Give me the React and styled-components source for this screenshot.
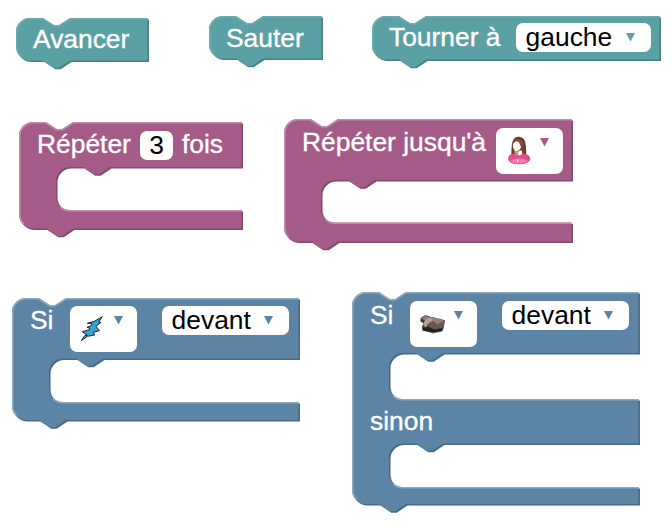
import React from "react";
import styled, { createGlobalStyle } from "styled-components";

const GlobalStyle = createGlobalStyle`
  body { margin: 0; background: #fff; }
`;

const palettes = {
  action: { main: "#5ba0a5", dark: "#498084", light: "#6cabb0" },
  loop: { main: "#a55b88", dark: "#84496d", light: "#c08cac" },
  logic: { main: "#5b84a5", dark: "#496a84", light: "#8ca9c0" },
};

const Workspace = styled.main`
  position: relative;
  width: 672px;
  height: 526px;
  overflow: hidden;
  background: #fff;
  font-family: "Liberation Sans", Arial, sans-serif;
  font-size: 26.4px;
`;

/* Blocks sit freely on the workspace canvas. */
const BlockFrame = styled.section`
  position: absolute;
  left: ${(p) => p.$x}px;
  top: ${(p) => p.$y}px;
  width: ${(p) => p.$width}px;
  height: ${(p) => p.$height}px;
  color: ${(p) => p.$tone.main};
`;

const Silhouette = styled.svg`
  position: absolute;
  inset: 0;
  overflow: visible;
`;

const Row = styled.div`
  position: relative;
  display: flex;
  align-items: flex-start;
  height: ${(p) => p.$height}px;
  padding: ${(p) => p.$top}px 0 0 ${(p) => p.$left || 17}px;
  box-sizing: border-box;
`;

const Label = styled.span`
  color: #fff;
  line-height: 29px;
  white-space: pre;
  -webkit-text-stroke: 0.35px #fff;
  margin-top: ${(p) => p.$shift || 0}px;
  margin-left: ${(p) => p.$gap || 0}px;
  width: ${(p) => (p.$width ? `${p.$width}px` : "auto")};
`;

const Field = styled.span`
  display: flex;
  flex: none;
  box-sizing: border-box;
  width: ${(p) => p.$width}px;
  height: 29px;
  margin-left: ${(p) => p.$gap || 0}px;
  padding: 0 16px 0 9.6px;
  justify-content: space-between;
  border-radius: 7px;
  background: #fff;
  line-height: 29px;
`;

const NumberField = styled(Field)`
  padding: 0;
  justify-content: center;
  line-height: 28px;
`;

const PictureField = styled(Field)`
  height: 45.5px;
  padding: 5px 14px 0 5px;
`;

const Value = styled.span`
  color: #000;
`;

const ArrowIcon = styled.svg`
  flex: none;
  margin-top: ${(p) => p.$top}px;
`;

const Picture = styled.svg`
  flex: none;
`;

function Arrow({ top = 10 }) {
  return (
    <ArrowIcon $top={top} width="9" height="9" viewBox="0 0 9 9">
      <path d="M0 0H9L4.5 8.5Z" fill="currentColor" />
    </ArrowIcon>
  );
}

const R = 14;
const ARM = 37;
const NOTCH = "l10.8 7.2h5.4l10.8 -7.2";
const TAB = "l-10.8 7.2h-5.4l-10.8 -7.2";

function outline(w, h, mouths) {
  const inner = mouths
    .map(
      ([top, bottom]) =>
        `V${top}H${ARM + 54}${TAB}H${ARM + R}a${R} ${R} 0 0 0 ${-R} ${R}` +
        `V${bottom - R}a${R} ${R} 0 0 0 ${R} ${R}H${w}`
    )
    .join("");
  return `M0 ${R}A${R} ${R} 0 0 1 ${R} 0H27${NOTCH}H${w}${inner}V${h}H54${TAB}H${R}A${R} ${R} 0 0 1 0 ${h - R}Z`;
}

function highlight(w, h, mouths) {
  const r = R - 0.8;
  const edge = `M4.6 ${h - 4.6}A${r} ${r} 0 0 1 .8 ${h - R}V${R}A${r} ${r} 0 0 1 ${R} .8H26.6l11.4 7.2h4.9l11.4 -7.2H${w}`;
  const lips = mouths
    .map(([, b]) => `M${ARM + 4.2} ${b - 3}a${R} ${R} 0 0 0 9.8 3.8H${w}`)
    .join("");
  return edge + lips;
}

function Block({ x, y, width, height, tone, mouths = [], children }) {
  const colors = palettes[tone];
  const w = width - 1.5;
  const h = height - 1.5;
  const shape = outline(w, h, mouths);
  return (
    <BlockFrame $x={x} $y={y} $width={width} $height={height} $tone={colors}>
      <Silhouette width={width} height={height + 8}>
        <path d={shape} fill={colors.dark} transform="translate(1.5 1.5)" />
        <path d={shape} fill={colors.main} />
        <path d={highlight(w, h, mouths)} fill="none" stroke={colors.light} strokeWidth="1.6" />
      </Silhouette>
      {children}
    </BlockFrame>
  );
}

function Dropdown({ children, width, gap }) {
  return (
    <Field $width={width} $gap={gap}>
      <Value>{children}</Value>
      <Arrow />
    </Field>
  );
}

function Girl() {
  return (
    <Picture width="33" height="33" viewBox="30 39 99 99">
      <path d="M61 104C62 92 61 79 64 67C68 52 79 48 90 52C102 56 104 69 105 83L106 106L88 112Z" fill="#703a30" />
      <path d="M70 62C77 54 87 55 94 64L98 88C93 77 85 67 76 64Z" fill="#8d5040" />
      <path d="M70 91H91L97 105Q83 116 71 104Z" fill="#c49566" />
      <path d="M66 72Q71 63 78 64Q88 69 90 83L84 91L74 94Q64 88 66 72Z" fill="#fff" />
      <path d="M80 97L92 91L93 101L84 107Z" fill="#fff" />
      <path d="M51 117Q52 101 69 101Q82 113 98 101Q118 103 118 118Q114 133 84 133Q54 133 51 117Z" fill="#e34a90" />
      <path d="M58 122Q83 109 111 122Q103 130 83 130Q65 130 58 122Z" fill="#ef80ad" />
      <path d="M78 119h3v6h-3z" fill="#fff" />
    </Picture>
  );
}

function Lightning() {
  return (
    <Picture width="33" height="33" viewBox="30 35 99 99">
      <path
        d="M112 52L101 68L108 69L93 81L103 94L85 99L89 107L67 111L49 124L59 109L67 108L52 97L73 91L74 86L66 84L78 79L81 72L67 72L88 66Z"
        fill="#39a0d5"
        stroke="#142531"
        strokeWidth="3"
        strokeLinejoin="round"
      />
    </Picture>
  );
}

function Rock() {
  return (
    <Picture width="33" height="33" viewBox="30 32 99 99">
      <path d="M50 97L62 108L84 115L113 108L115 99Z" fill="#9facb0" />
      <path d="M47 68L61 60L75 64L91 67L120 75L116 98L111 108L85 112L53 106L51 95L55 84L46 78Z" fill="#4a3d38" />
      <path d="M48 69L61 61L76 65L94 68L118 76L97 88L82 76L68 86L62 98L54 87L60 75Z" fill="#958078" />
      <path d="M61 74L76 65L83 76L68 87L62 98L56 87Z" fill="#b5a39b" />
      <path d="M83 76L97 88L118 76L115 98L88 101L68 94L68 86Z" fill="#6b5951" />
      <path d="M52 98L70 94L88 103L112 99L110 107L85 111L54 105Z" fill="#211e20" />
      <path d="M47 69L61 61L75 65" fill="none" stroke="#77685f" strokeWidth="3" />
    </Picture>
  );
}

function PicturePicker({ children, width = 67, gap, arrowTop = 5 }) {
  return (
    <PictureField $width={width} $gap={gap}>
      {children}
      <Arrow top={arrowTop} />
    </PictureField>
  );
}

export default function App() {
  return (
    <>
      <GlobalStyle />
      <Workspace>
        <Block x={16} y={18} width={133} height={44} tone="action">
          <Row $height={44} $top={7}><Label>Avancer</Label></Row>
        </Block>
        <Block x={209} y={16} width={114} height={44} tone="action">
          <Row $height={44} $top={8}><Label>Sauter</Label></Row>
        </Block>
        <Block x={372} y={16} width={289} height={45} tone="action">
          <Row $height={45} $top={7}>
            <Label $width={127}>Tourner à</Label>
            <Dropdown width={135}>gauche</Dropdown>
          </Row>
        </Block>

        <Block x={19} y={122} width={224} height={108} tone="loop" mouths={[[45, 88]]}>
          <Row $height={46} $top={9} $left={18}>
            <Label $shift={-1} $width={103}>Répéter</Label>
            <NumberField $width={33}><Value>3</Value></NumberField>
            <Label $shift={-1} $gap={9}>fois</Label>
          </Row>
        </Block>
        <Block x={284} y={119} width={289} height={124} tone="loop" mouths={[[61, 103.5]]}>
          <Row $height={62} $top={9} $left={18}>
            <Label $width={193.5}>Répéter jusqu'à</Label>
            <PicturePicker><Girl /></PicturePicker>
          </Row>
        </Block>

        <Block x={12} y={298} width={288} height={123.5} tone="logic" mouths={[[60.5, 104]]}>
          <Row $height={62} $top={8} $left={18}>
            <Label $width={40}>Si</Label>
            <PicturePicker><Lightning /></PicturePicker>
            <Dropdown width={127} gap={25}>devant</Dropdown>
          </Row>
        </Block>
        <Block x={352} y={292} width={288} height={213.5} tone="logic" mouths={[[61, 107], [151.5, 195]]}>
          <Row $height={107} $top={9} $left={18}>
            <Label $width={40}>Si</Label>
            <PicturePicker><Rock /></PicturePicker>
            <Dropdown width={127} gap={25}>devant</Dropdown>
          </Row>
          <Row $height={45} $top={8} $left={18}><Label>sinon</Label></Row>
        </Block>
      </Workspace>
    </>
  );
}
